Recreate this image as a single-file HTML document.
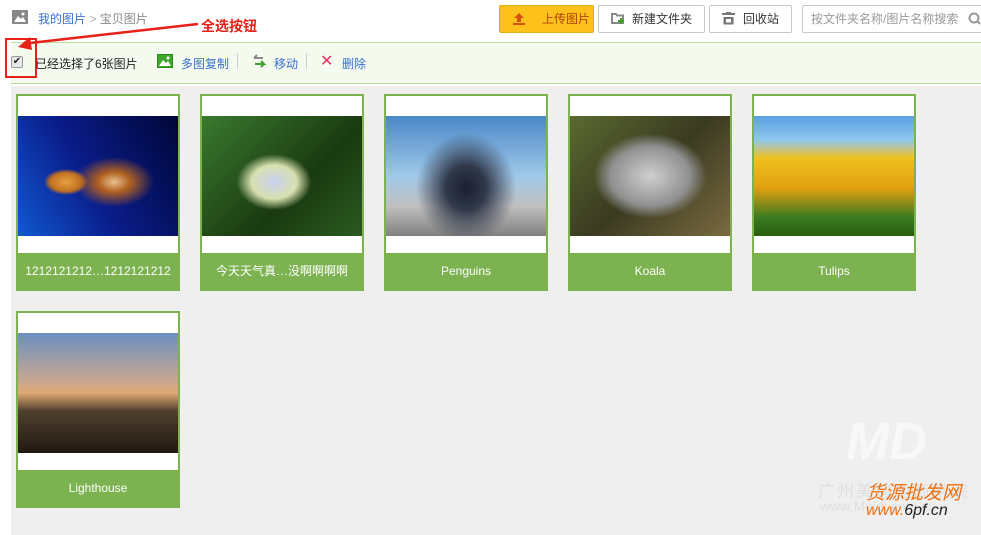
<!DOCTYPE html>
<html><head><meta charset="utf-8"><style>
*{margin:0;padding:0;box-sizing:border-box}
body{width:981px;height:535px;overflow:hidden;background:#fff;font-family:"Liberation Sans","Noto Sans CJK SC",sans-serif;font-size:12px;position:relative;color:#333}
.a{position:absolute}
.btn{position:absolute;top:5px;height:28px;border:1px solid #c8c8c8;border-radius:2px;background:#fff;font-size:12px;line-height:26px;color:#333}
.gray{position:absolute;left:11px;top:86px;width:970px;height:449px;background:#efefef}
.card{position:absolute;width:164px;height:197px;border:2px solid #7cb24f;background:#fff}
.card .img{position:absolute;left:0;top:20px;width:160px;height:120px}
.card .cap{position:absolute;left:0;bottom:0;width:160px;height:36px;background:#7cb24f;color:#fff;text-align:center;line-height:36px;font-size:12px}
</style></head><body>
<svg class="a" style="left:12px;top:10px" width="16" height="14"><rect x="0" y="0" width="16" height="14" fill="#888"/><path d="M2 12 L6 6 L9 9 L11 7 L14 12Z" fill="#fff"/><circle cx="11" cy="4" r="1.5" fill="#fff"/></svg>
<div class="a" style="left:38px;top:10px;font-size:12px;color:#3a6fd0">我的图片 <span style="color:#aaa">&gt;</span> <span style="color:#888">宝贝图片</span></div>
<div class="a" style="left:201px;top:16px;font-size:14px;font-weight:bold;color:#e8201a">全选按钮</div>
<div class="btn" style="left:499px;width:95px;background:#fcc11a;border-color:#e8ad10;color:#b0420a;padding-left:42px">上传图片</div>
<svg class="a" style="left:512px;top:12px" width="14" height="14"><path d="M7 1 L12 6 H9 V10 H5 V6 H2Z" fill="#d8500f"/><rect x="1" y="11" width="12" height="2" fill="#d8500f"/></svg>
<div class="btn" style="left:598px;width:107px;padding-left:33px">新建文件夹</div>
<svg class="a" style="left:611px;top:12px" width="14" height="13"><path d="M1 2 H5 L6 3.5 H12 V11 H1Z" fill="none" stroke="#888" stroke-width="2"/><path d="M10 6 V12 M7 9 H13" stroke="#3ca02a" stroke-width="2"/></svg>
<div class="btn" style="left:709px;width:83px;padding-left:33px">回收站</div>
<svg class="a" style="left:722px;top:12px" width="13" height="13"><rect x="0" y="1" width="13" height="2" fill="#777"/><rect x="4" y="0" width="5" height="2" fill="#777"/><path d="M1.5 5 H11.5 V12.5 H1.5Z M4 7 V10.5 H9 V7Z" fill="#777" fill-rule="evenodd"/></svg>
<div class="btn" style="left:802px;width:190px;color:#999;padding-left:8px">按文件夹名称/图片名称搜索</div>
<svg class="a" style="left:968px;top:12px" width="13" height="14"><circle cx="6" cy="6" r="4.5" fill="none" stroke="#999" stroke-width="2"/><path d="M9 9 L12 12" stroke="#999" stroke-width="2"/></svg>
<div class="a" style="left:11px;top:42px;width:970px;height:42px;background:#f4fbee;border-top:1px solid #b8e09a;border-bottom:1px solid #b8e09a"></div>
<div class="a" style="left:11px;top:56px;width:12px;height:12px;border:1px solid #999;border-radius:2px;background:#e8e8e8;font-size:10px;line-height:10px;text-align:center;color:#222">✔</div>
<div class="a" style="left:5px;top:38px;width:32px;height:40px;border:2px solid #e8201a"></div>
<svg class="a" style="left:0;top:10px" width="260" height="50"><path d="M198 14 L30 33" stroke="#e8201a" stroke-width="2.5"/><path d="M18 37 L30 27 L32 40Z" fill="#e8201a"/></svg>
<div class="a" style="left:35px;top:55px;font-size:12px;color:#222">已经选择了6张图片</div>
<svg class="a" style="left:157px;top:54px" width="16" height="14"><rect x="0.5" y="0.5" width="15" height="13" fill="#3fa82a" stroke="#2a8a1a"/><path d="M2 12 L6 6 L9 9 L11 7 L14 12Z" fill="#fff"/><circle cx="11" cy="4" r="1.5" fill="#fff"/></svg>
<div class="a" style="left:181px;top:55px;font-size:12px;color:#3a6fd0">多图复制</div>
<div class="a" style="left:237px;top:53px;width:1px;height:16px;background:#ccc"></div>
<svg class="a" style="left:251px;top:54px" width="16" height="14"><path d="M3 4 H12 M3 4 L6 1" stroke="#888" stroke-width="2" fill="none"/><path d="M4 10 H13 L10 7 M13 10 L10 13" stroke="#3ca02a" stroke-width="2" fill="none"/></svg>
<div class="a" style="left:274px;top:55px;font-size:12px;color:#3a6fd0">移动</div>
<div class="a" style="left:306px;top:53px;width:1px;height:16px;background:#ccc"></div>
<div class="a" style="left:320px;top:51px;font-size:16px;color:#e0306a">✕</div>
<div class="a" style="left:342px;top:55px;font-size:12px;color:#3a6fd0">删除</div>
<div class="gray"></div>
<div class="card" style="left:16px;top:94px"><div class="img" style="background:radial-gradient(ellipse 40px 25px at 60% 55%,#e8c090 0,#b06020 40%,transparent 100%),radial-gradient(ellipse at 30% 55%,#e8a040 0,#c07020 10%,transparent 14%),linear-gradient(60deg,#1058d0 0,#0a1c8a 45%,#000638 100%)"></div><div class="cap">1212121212…1212121212</div></div>
<div class="card" style="left:200px;top:94px"><div class="img" style="background:radial-gradient(ellipse at 45% 55%,#c8d0f0 0,#d8e0b0 18%,transparent 30%),linear-gradient(135deg,#3a7a30,#1a3a10 60%,#2a5a20)"></div><div class="cap">今天天气真…没啊啊啊啊</div></div>
<div class="card" style="left:384px;top:94px"><div class="img" style="background:radial-gradient(ellipse 50px 55px at 50% 60%,#1a2030 0,#30384a 40%,transparent 100%),linear-gradient(180deg,#4a88c8 0,#a0c8e8 50%,#c0c0c0 75%,#808080 100%)"></div><div class="cap">Penguins</div></div>
<div class="card" style="left:568px;top:94px"><div class="img" style="background:radial-gradient(ellipse at 50% 50%,#d0d0d0 0,#909090 35%,transparent 50%),linear-gradient(135deg,#5a6a30,#3a3a20 50%,#7a6a40)"></div><div class="cap">Koala</div></div>
<div class="card" style="left:752px;top:94px"><div class="img" style="background:linear-gradient(180deg,#5aa0e0 0,#90c8f0 20%,#f0c020 35%,#e0a010 60%,#3a7a20 85%,#2a6010 100%)"></div><div class="cap">Tulips</div></div>
<div class="card" style="left:16px;top:311px"><div class="img" style="background:linear-gradient(180deg,#6a90c0 0,#c8a890 40%,#e0a870 50%,#504030 65%,#201810 100%)"></div><div class="cap">Lighthouse</div></div>
<div class="a" style="left:846px;top:412px;font-size:52px;font-weight:bold;font-style:italic;color:#f8f8f8">MD</div>
<div class="a" style="left:818px;top:477px;font-size:17px;color:#e0e0e0;letter-spacing:2px">广州美迪电商学院</div>
<div class="a" style="left:820px;top:498px;font-size:14px;color:#e0e0e0">www.Meidi.com.cn</div>
<div class="a" style="left:866px;top:478px;font-size:19px;color:#f07010;font-style:italic">货源批发网</div>
<div class="a" style="left:866px;top:502px;font-size:16px;color:#f07010;font-style:italic">www.<span style="color:#222">6pf.cn</span></div>
</body></html>
